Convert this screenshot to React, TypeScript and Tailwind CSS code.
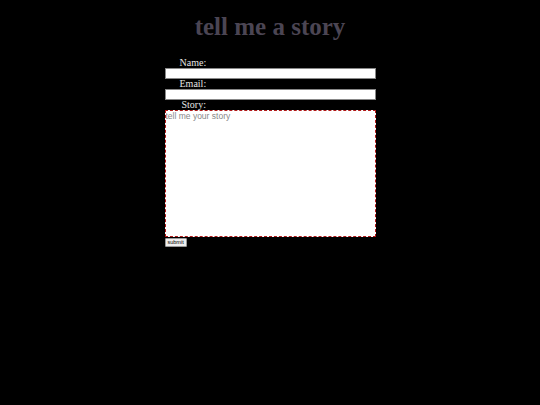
export default function App() {
  return (
    <div className="min-h-[405px] w-full bg-black" style={{ fontFamily: '"Liberation Serif", serif' }}>
      <h1 className="pt-[12px] text-center text-[25px] font-bold leading-[30px] text-[#4b4553]">
        tell me a story
      </h1>
      <form className="mx-auto mt-[15px] flex w-[211px] flex-col" onSubmit={(e) => e.preventDefault()}>
        <label className="pl-[15px] text-[10px] leading-[11px] text-[#e5e5e5]">Name:</label>
        <input type="text" className="box-border block h-[11px] w-full border border-[#888] bg-white outline-none" />
        <label className="pl-[15px] text-[10px] leading-[10px] text-[#e5e5e5]">Email:</label>
        <input type="email" className="box-border block h-[11px] w-full border border-[#888] bg-white outline-none" />
        <label className="pl-[17px] text-[10px] leading-[10px] text-[#e5e5e5]">Story:</label>
        <textarea
          placeholder="tell me your story"
          className="box-border block h-[127px] w-full resize-none border border-dashed border-[#b01818] bg-white p-0 text-[8.5px] leading-[11px] text-black outline-none placeholder:text-[#888888]"
          style={{ fontFamily: '"Liberation Sans", sans-serif' }}
        />
        <div className="mt-[1px] flex">
          <button
            type="submit"
            className="box-border h-[9px] rounded-[1px] border border-[#999] bg-[#efefef] px-[2px] text-[5.5px] leading-[7px] text-black"
            style={{ fontFamily: '"Liberation Sans", sans-serif' }}
          >
            submit
          </button>
        </div>
      </form>
    </div>
  );
}
